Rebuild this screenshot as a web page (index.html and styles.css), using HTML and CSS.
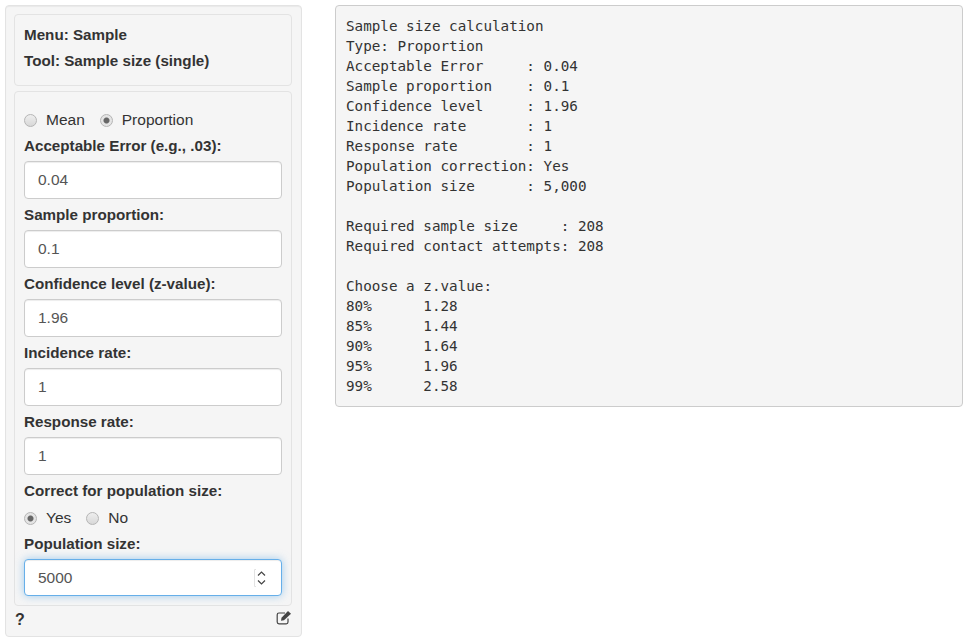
FILE: index.html
```html
<!DOCTYPE html>
<html lang="en">
<head>
  <meta charset="UTF-8">
  <title>Sample size (single)</title>
  <link rel="stylesheet" href="styles.css">
</head>
<body>

  <div class="sidebar">
    <div class="well well-title">
      <p>Menu: Sample</p>
      <p>Tool: Sample size (single)</p>
    </div>

    <form class="well well-form">
      <div class="radio-row radio-row-top">
        <label><input type="radio" name="type"> Mean</label>
        <label><input type="radio" name="type" checked> Proportion</label>
      </div>

      <label class="field-label">Acceptable Error (e.g., .03):</label>
      <input class="field" type="text" value="0.04">

      <label class="field-label">Sample proportion:</label>
      <input class="field" type="text" value="0.1">

      <label class="field-label">Confidence level (z-value):</label>
      <input class="field" type="text" value="1.96">

      <label class="field-label">Incidence rate:</label>
      <input class="field" type="text" value="1">

      <label class="field-label">Response rate:</label>
      <input class="field" type="text" value="1">

      <label class="field-label">Correct for population size:</label>
      <div class="radio-row radio-row-correct">
        <label><input type="radio" name="correct" checked> Yes</label>
        <label><input type="radio" name="correct"> No</label>
      </div>

      <label class="field-label">Population size:</label>
      <div class="spinner-wrap">
        <input class="field field-focus" type="text" value="5000">
        <svg class="spinner" width="16" height="20" viewBox="0 0 16 20">
          <path d="M3 1.500H1.500V18.500H3" fill="none" stroke="#e2e2e2"/>
          <path d="M5 7.500L8.500 4L12 7.500" fill="none" stroke="#444" stroke-width="1.200"/>
          <path d="M5 12.500L8.500 16L12 12.500" fill="none" stroke="#444" stroke-width="1.200"/>
        </svg>
      </div>
    </form>

    <div class="sidebar-foot">
      <span class="help">?</span>
      <svg class="edit-icon" width="16" height="15" viewBox="0 0 16 15">
        <path d="M12 8.500V12A1.800 1.800 0 0 1 10.200 13.800H3A1.800 1.800 0 0 1 1.200 12V4.800A1.800 1.800 0 0 1 3 3H9" fill="none" stroke="#444" stroke-width="1.200"/>
        <path d="M5.500 7.800L12 1L15 3.800L8 10.300L5 10.800Z" fill="#444"/>
      </svg>
    </div>
  </div>

  <pre class="output">Sample size calculation
Type: Proportion
Acceptable Error     : 0.04
Sample proportion    : 0.1
Confidence level     : 1.96
Incidence rate       : 1
Response rate        : 1
Population correction: Yes
Population size      : 5,000

Required sample size     : 208
Required contact attempts: 208

Choose a z.value:
80%      1.28
85%      1.44
90%      1.64
95%      1.96
99%      2.58</pre>

</body>
</html>
```

FILE: styles.css
```css
body {
  margin: 0;
  padding: 5px 4px 5px 5px;
  display: flex;
  align-items: flex-start;
  gap: 33px;
  font-family: 'Liberation Sans', Arial, sans-serif;
  font-size: 15.500px;
  line-height: 20px;
  color: #333;
  background: #fff;
}

.sidebar {
  width: 297px;
  height: 632px;
  box-sizing: border-box;
  padding: 8px 9px 0 8px;
  background: #f5f5f5;
  border: 1px solid #e3e3e3;
  border-radius: 4px;
  box-shadow: inset 0 1px 1px rgba(0, 0, 0, 0.05);
  flex-shrink: 0;
}

.well {
  background: #f5f5f5;
  border: 1px solid #e3e3e3;
  border-radius: 4px;
  box-sizing: border-box;
}

.well-title {
  height: 72px;
  padding: 10px 9px 0;
  font-size: 15.200px;
  font-weight: bold;
}

.well-title p {
  margin: 0 0 6px;
}

.well-form {
  margin-top: 5px;
  height: 515px;
  padding: 18px 9px 0;
}

.radio-row {
  display: flex;
  gap: 15px;
  height: 20px;
  margin-bottom: 6px;
}

.radio-row-correct {
  margin-top: 7px;
}

.radio-row label {
  display: flex;
  align-items: center;
  gap: 9px;
}

.radio-row input {
  appearance: none;
  width: 13px;
  height: 13px;
  margin: 0;
  border: 1px solid #b5b5b5;
  border-radius: 50%;
  background: linear-gradient(#eee, #d8d8d8);
}

.radio-row input:checked {
  background: radial-gradient(circle, #666 0 2.500px, #e4e4e4 3.500px);
}

.field-label {
  display: block;
  font-size: 15.200px;
  font-weight: bold;
  margin-bottom: 5px;
}

.field {
  display: block;
  width: 100%;
  height: 38px;
  box-sizing: border-box;
  margin-bottom: 6px;
  padding: 6px 13px;
  font-family: inherit;
  font-size: 15.500px;
  color: #555;
  background: #fff;
  border: 1px solid #ccc;
  border-radius: 4px;
  box-shadow: inset 0 1px 1px rgba(0, 0, 0, 0.075);
}

.field-focus {
  height: 37px;
  border-color: #66afe9;
  box-shadow: inset 0 1px 1px rgba(0, 0, 0, 0.075), 0 0 8px rgba(102, 175, 233, 0.6);
}

.spinner-wrap {
  position: relative;
}

.spinner {
  position: absolute;
  top: 9px;
  right: 13px;
}

.sidebar-foot {
  display: flex;
  justify-content: space-between;
  align-items: flex-start;
  padding: 2px 0 0 1px;
}

.help {
  margin-top: 2px;
  font-weight: bold;
  font-size: 16px;
}

.edit-icon {
  margin-top: 2px;
}

.output {
  margin: 0;
  width: 628px;
  height: 402px;
  box-sizing: border-box;
  padding: 10px 10px;
  font-family: 'DejaVu Sans Mono', monospace;
  font-size: 14.280px;
  line-height: 20px;
  color: #333;
  background: #f5f5f5;
  border: 1px solid #ccc;
  border-radius: 4px;
}
```
